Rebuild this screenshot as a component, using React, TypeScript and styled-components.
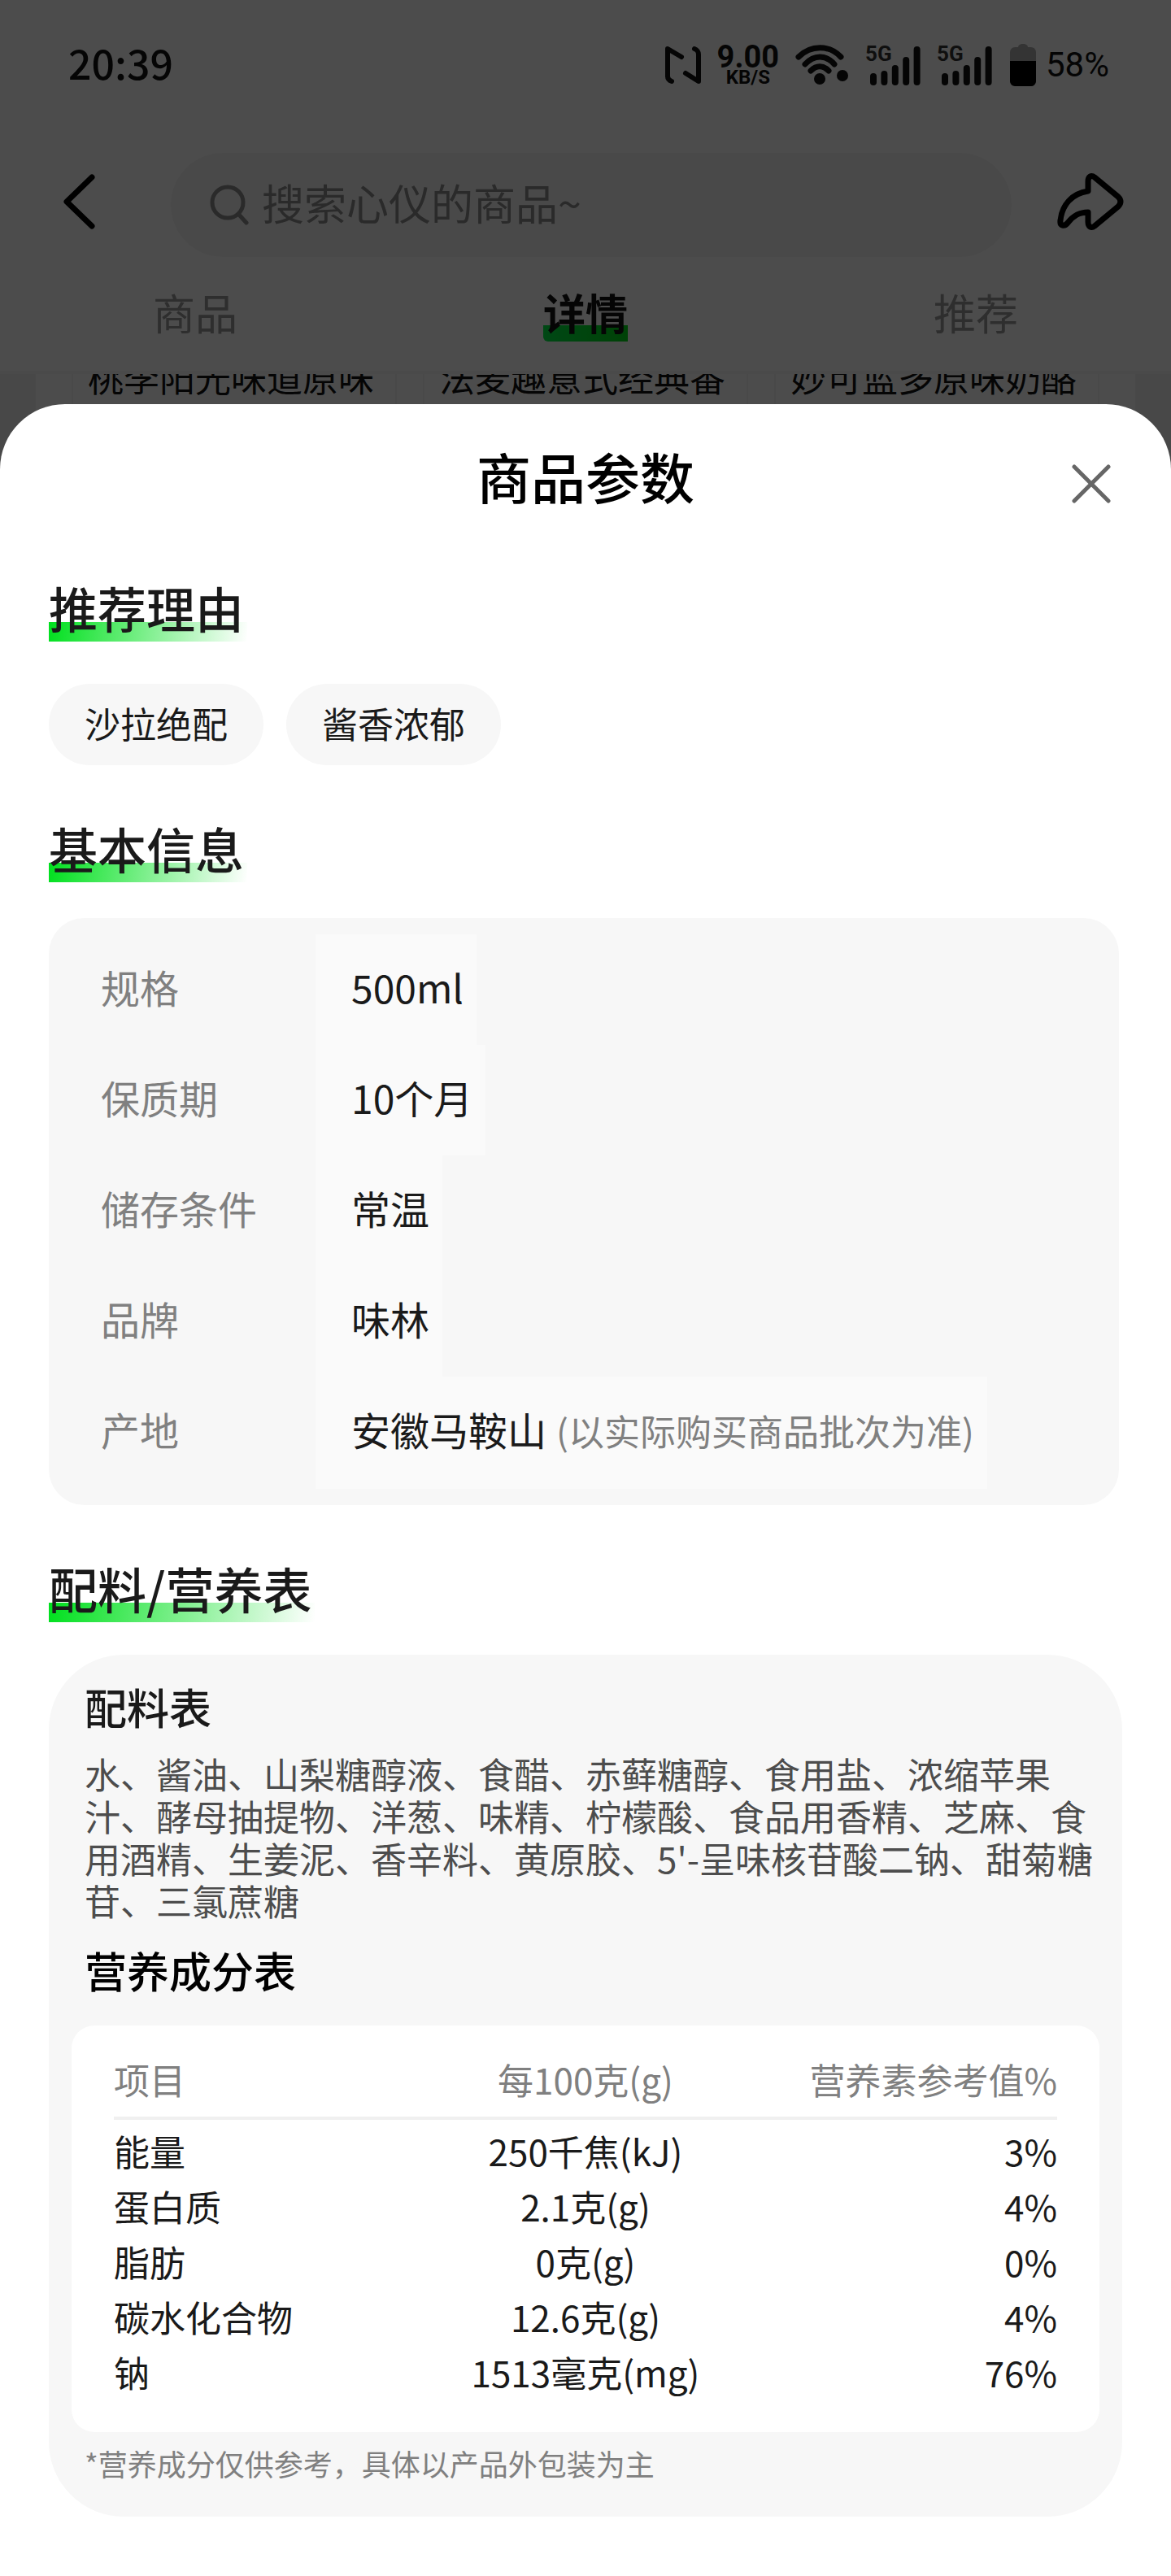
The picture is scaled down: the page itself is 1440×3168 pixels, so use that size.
import React from "react";
import styled, { createGlobalStyle } from "styled-components";

const GlobalStyle = createGlobalStyle`
  *, *::before, *::after { box-sizing: border-box; }
  body {
    margin: 0;
    background: #fff;
    color: #1a1a1a;
    font-family: "Noto Sans CJK SC", "Liberation Sans", sans-serif;
    font-size: 44px;
  }
  button, input { font: inherit; }
`;

const Page = styled.div`
  position: relative;
  display: flex;
  flex-direction: column;
  min-height: 100vh;
`;

const TopArea = styled.header`
  background: #fff;
  border-bottom: 4px solid #f7f7f7;
`;

const StatusBar = styled.div`
  display: flex;
  align-items: center;
  justify-content: space-between;
  height: 160px;
  padding: 0 76px 0 84px;
  color: #111;
`;

const Clock = styled.time`
  padding-bottom: 8px;
  font-size: 50px;
  font-weight: 500;
  line-height: 64px;
`;

const StatusIcons = styled.div`
  display: flex;
  align-items: center;
  gap: 20px;
  font-family: Roboto, "Liberation Sans", sans-serif;

  svg { display: block; }
`;

const Speed = styled.div`
  display: flex;
  flex-direction: column;
  align-items: center;
  font-weight: 700;
`;

const SpeedValue = styled.span`
  font-size: 38px;
  line-height: 30px;
`;

const SpeedUnit = styled.span`
  font-size: 24px;
  line-height: 20px;
`;

const Signal = styled.div`
  display: grid;
  width: 68px;

  > * { grid-area: 1 / 1; }
`;

const SignalLabel = styled.span`
  font-size: 26px;
  font-weight: 700;
  line-height: 22px;
  color: #333;
`;

const Battery = styled.div`
  display: flex;
  align-items: center;
  gap: 12px;
  margin-left: 2px;
  font-size: 42px;
  line-height: 52px;
`;

const NavBar = styled.nav`
  display: flex;
  align-items: flex-start;
  padding: 28px 58px 32px 76px;
`;

const IconButton = styled.button`
  display: flex;
  align-items: center;
  flex: none;
  height: 120px;
  padding: 0;
  border: 0;
  background: none;
  color: #000;
`;

const SearchBox = styled.label`
  display: flex;
  align-items: center;
  flex: 1;
  gap: 16px;
  height: 128px;
  margin: 0 56px 0 92px;
  padding: 0 48px;
  border-radius: 64px;
  background: #f6f6f6;
  color: #8c8c8c;

  svg { flex: none; }
`;

const SearchInput = styled.input`
  flex: 1;
  min-width: 0;
  height: 88px;
  padding: 0 0 8px;
  border: 0;
  outline: 0;
  background: none;
  font-size: 52px;

  &::placeholder { color: #8c8c8c; opacity: 1; }
`;

const Tabs = styled.div`
  display: flex;
  padding-bottom: 36px;
`;

const TabCell = styled.div`
  display: flex;
  flex: 1;
  justify-content: center;
`;

const Tab = styled.button<{ $active?: boolean }>`
  padding: 0;
  border: 0;
  background: ${(p) =>
    p.$active
      ? "linear-gradient(90deg, #00f046, #00dc18) left bottom / 100% 20px no-repeat"
      : "none"};
  border-radius: 0 0 0 6px;
  font-size: 52px;
  font-weight: ${(p) => (p.$active ? 700 : 400)};
  line-height: 72px;
  color: ${(p) => (p.$active ? "#111" : "#999")};
`;

const Strip = styled.div`
  height: 117px;
  padding: 0 44px;
  overflow: hidden;
  background: #f0f0f0;
`;

const StripInner = styled.div`
  display: flex;
  gap: 32px;
  height: 100%;
  padding: 0 44px;
  background: #fff;
`;

const ProductCard = styled.div`
  flex: 1;
  min-width: 0;
  padding: 0 18px;
  border: 2px solid #f4f4f4;
  border-width: 0 2px;
`;

const ProductName = styled.div`
  margin-top: -27px;
  white-space: nowrap;
  line-height: 60px;
  color: #111;
`;

const Backdrop = styled.div`
  position: absolute;
  inset: 0;
  background: rgba(0, 0, 0, 0.7);
`;

const Sheet = styled.main`
  position: relative;
  flex: 1;
  margin-top: -80px;
  padding-bottom: 72px;
  border-radius: 80px 80px 0 0;
  background: #fff;
`;

const SheetHeader = styled.div`
  display: grid;
  grid-template-columns: 1fr auto 1fr;
  align-items: end;
  padding: 44px 64px 16px;
`;

const SheetTitle = styled.h1`
  grid-column: 2;
  margin: 0;
  font-size: 67px;
  font-weight: 500;
  line-height: 88px;
  color: #000;
`;

const CloseButton = styled.button`
  display: flex;
  align-items: center;
  justify-content: center;
  justify-self: end;
  width: 68px;
  height: 68px;
  padding: 0;
  border: 0;
  background: none;
  color: #666;
`;

const Section = styled.section`
  padding: 60px 60px 0;
`;

const SectionTitle = styled.h2`
  width: fit-content;
  margin: 0 0 40px;
  padding-right: 4px;
  background: linear-gradient(100deg, #00e01e, rgba(0, 224, 30, 0)) left bottom /
    100% 24px no-repeat;
  font-size: 60px;
  font-weight: 500;
  line-height: 84px;
`;

const Chips = styled.ul`
  display: flex;
  gap: 28px;
  margin: 0;
  padding: 12px 0 0;
  list-style: none;
`;

const Chip = styled.li`
  padding: 0 44px 4px;
  border-radius: 50px;
  background: #f7f7f7;
  line-height: 96px;
`;

const InfoList = styled.dl`
  margin: 44px 4px 0 0;
  padding: 20px 64px;
  border-radius: 44px;
  background: #f7f7f7;
  font-size: 48px;
  line-height: 128px;
`;

const InfoRow = styled.div`
  display: flex;
`;

const InfoLabel = styled.dt`
  width: 264px;
  padding-bottom: 8px;
  color: #808080;
`;

const InfoValue = styled.dd`
  margin: 0;
  padding: 0 16px 8px 44px;
  background: #fafafa;
`;

const InfoNote = styled.span`
  margin-left: 12px;
  font-size: 44px;
  color: #808080;
`;

const NutritionCard = styled.div`
  padding: 32px 28px 44px;
  border-radius: 92px;
  background: #f7f7f7;
`;

const CardTitle = styled.h3<{ $dark?: boolean }>`
  margin: 0;
  padding: 0 16px;
  font-size: 52px;
  font-weight: 500;
  line-height: 64px;
  color: ${(p) => (p.$dark ? "#000" : "#1a1a1a")};
`;

const Ingredients = styled.p`
  margin: 24px 0 28px;
  padding: 0 8px 0 16px;
  line-height: 52px;
  color: #4d4d4d;
`;

const TablePanel = styled.div`
  margin: 36px 0 16px;
  padding: 32px 52px 40px;
  border-radius: 28px;
  background: #fff;
`;

const Table = styled.table`
  width: 100%;
  table-layout: fixed;
  border-collapse: separate;
  border-spacing: 0;
  line-height: 68px;
`;

const HeadCell = styled.th<{ $align: string }>`
  padding: 0 0 12px;
  border-bottom: 4px solid #f0f0f0;
  font-weight: 400;
  text-align: ${(p) => p.$align};
  color: #808080;
`;

const BodyCell = styled.td<{ $align: string }>`
  padding: 0;
  text-align: ${(p) => p.$align};

  tr:first-child > & { padding-top: 4px; }
`;

const Footnote = styled.p`
  margin: 0;
  padding: 0 16px;
  font-size: 36px;
  line-height: 44px;
  color: #808080;
`;

const ALIGN = ["left", "center", "right"];

const PRODUCTS = ["桃李阳光味道原味", "法麦趣意式经典番", "妙可蓝多原味奶酪"];

const REASONS = ["沙拉绝配", "酱香浓郁"];

const INFO: { label: string; value: string; note?: string }[] = [
  { label: "规格", value: "500ml" },
  { label: "保质期", value: "10个月" },
  { label: "储存条件", value: "常温" },
  { label: "品牌", value: "味林" },
  { label: "产地", value: "安徽马鞍山", note: "(以实际购买商品批次为准)" },
];

const INGREDIENTS =
  "水、酱油、山梨糖醇液、食醋、赤藓糖醇、食用盐、浓缩苹果汁、酵母抽提物、洋葱、味精、柠檬酸、食品用香精、芝麻、食用酒精、生姜泥、香辛料、黄原胶、5'-呈味核苷酸二钠、甜菊糖苷、三氯蔗糖";

const HEAD = ["项目", "每100克(g)", "营养素参考值%"];

const NUTRITION = [
  ["能量", "250千焦(kJ)", "3%"],
  ["蛋白质", "2.1克(g)", "4%"],
  ["脂肪", "0克(g)", "0%"],
  ["碳水化合物", "12.6克(g)", "4%"],
  ["钠", "1513毫克(mg)", "76%"],
];

const NfcIcon = () => (
  <svg width="44" height="48" viewBox="0 0 44 48" fill="none" stroke="currentColor" strokeWidth="6" strokeLinecap="round" strokeLinejoin="round">
    <path d="M8 44C5 43 3 41 3 38V4L20 14" />
    <path d="M36 4C39 5 41 8 41 11V44L25 34" />
  </svg>
);

const WifiIcon = () => (
  <svg width="66" height="50" viewBox="0 0 66 50" fill="none" stroke="currentColor" strokeWidth="7" strokeLinecap="round">
    <path d="M4 15C19 0 42 0 56 15" />
    <path d="M12 24C23 12 38 12 48 24" />
    <path d="M19 32C26 25 34 25 41 32" />
    <circle cx="30" cy="42" r="7" fill="currentColor" stroke="none" />
    <circle cx="58" cy="38" r="7" fill="currentColor" stroke="none" />
  </svg>
);

const BARS = [15, 18, 25, 35, 48];

const SignalIcon = () => (
  <Signal>
    <SignalLabel>5G</SignalLabel>
    <svg width="68" height="50" viewBox="0 0 68 50" fill="currentColor">
      {BARS.map((h, i) => (
        <rect key={h} x={6 + i * 13.4} y={50 - h} width="8" height={h} rx="4" />
      ))}
    </svg>
  </Signal>
);

const BatteryIcon = () => (
  <svg width="32" height="52" viewBox="0 0 32 52">
    <path d="M10 4C10 2 12 0 16 0S22 2 22 4H26A6 6 0 0 1 32 10V21H0V10A6 6 0 0 1 6 4Z" fill="#b0b0b0" />
    <path d="M0 21H32V46A6 6 0 0 1 26 52H6A6 6 0 0 1 0 46Z" fill="#000" />
  </svg>
);

const BackIcon = () => (
  <svg width="42" height="72" viewBox="0 0 42 72" fill="none" stroke="currentColor" strokeWidth="7" strokeLinecap="round" strokeLinejoin="round">
    <path d="M37 6L6 36L37 66" />
  </svg>
);

const ShareIcon = () => (
  <svg width="82" height="70" viewBox="0 0 82 70" fill="none" stroke="currentColor" strokeWidth="7" strokeLinejoin="round">
    <path d="M38 22V10C38 4 42 2 46 5L75 29C79 33 79 37 75 41L46 65C42 68 38 66 38 60V48C27 48 20 52 13 61C9 66 3 65 4 58C6 39 18 25 38 22Z" />
  </svg>
);

const SearchIcon = () => (
  <svg width="48" height="50" viewBox="0 0 48 50" fill="none" stroke="currentColor" strokeWidth="5" strokeLinecap="round">
    <circle cx="22" cy="22" r="19" />
    <path d="M35 36L45 47" />
  </svg>
);

const CloseIcon = () => (
  <svg width="48" height="48" viewBox="0 0 48 48" fill="none" stroke="currentColor" strokeWidth="5" strokeLinecap="round">
    <path d="M3 3L45 45M45 3L3 45" />
  </svg>
);

export default function App() {
  return (
    <>
      <GlobalStyle />
      <Page>
        <TopArea>
          <StatusBar>
            <Clock>20:39</Clock>
            <StatusIcons>
              <NfcIcon />
              <Speed>
                <SpeedValue>9.00</SpeedValue>
                <SpeedUnit>KB/S</SpeedUnit>
              </Speed>
              <WifiIcon />
              <SignalIcon />
              <SignalIcon />
              <Battery>
                <BatteryIcon />
                <span>58%</span>
              </Battery>
            </StatusIcons>
          </StatusBar>
          <NavBar>
            <IconButton type="button" aria-label="返回">
              <BackIcon />
            </IconButton>
            <SearchBox>
              <SearchIcon />
              <SearchInput type="text" placeholder="搜索心仪的商品~" aria-label="搜索" />
            </SearchBox>
            <IconButton type="button" aria-label="分享">
              <ShareIcon />
            </IconButton>
          </NavBar>
          <Tabs>
            <TabCell>
              <Tab type="button">商品</Tab>
            </TabCell>
            <TabCell>
              <Tab type="button" $active>详情</Tab>
            </TabCell>
            <TabCell>
              <Tab type="button">推荐</Tab>
            </TabCell>
          </Tabs>
        </TopArea>
        <Strip>
          <StripInner>
            {PRODUCTS.map((name) => (
              <ProductCard key={name}>
                <ProductName>{name}</ProductName>
              </ProductCard>
            ))}
          </StripInner>
        </Strip>
        <Backdrop />
        <Sheet role="dialog" aria-labelledby="sheet-title">
          <SheetHeader>
            <SheetTitle id="sheet-title">商品参数</SheetTitle>
            <CloseButton type="button" aria-label="关闭">
              <CloseIcon />
            </CloseButton>
          </SheetHeader>
          <Section>
            <SectionTitle>推荐理由</SectionTitle>
            <Chips>
              {REASONS.map((reason) => (
                <Chip key={reason}>{reason}</Chip>
              ))}
            </Chips>
          </Section>
          <Section>
            <SectionTitle>基本信息</SectionTitle>
            <InfoList>
              {INFO.map((row) => (
                <InfoRow key={row.label}>
                  <InfoLabel>{row.label}</InfoLabel>
                  <InfoValue>
                    {row.value}
                    {row.note && <InfoNote>{row.note}</InfoNote>}
                  </InfoValue>
                </InfoRow>
              ))}
            </InfoList>
          </Section>
          <Section>
            <SectionTitle>配料/营养表</SectionTitle>
            <NutritionCard>
              <CardTitle>配料表</CardTitle>
              <Ingredients>{INGREDIENTS}</Ingredients>
              <CardTitle $dark>营养成分表</CardTitle>
              <TablePanel>
                <Table>
                  <thead>
                    <tr>
                      {HEAD.map((text, i) => (
                        <HeadCell key={text} scope="col" $align={ALIGN[i]}>{text}</HeadCell>
                      ))}
                    </tr>
                  </thead>
                  <tbody>
                    {NUTRITION.map((row) => (
                      <tr key={row[0]}>
                        {row.map((text, i) => (
                          <BodyCell key={ALIGN[i]} $align={ALIGN[i]}>{text}</BodyCell>
                        ))}
                      </tr>
                    ))}
                  </tbody>
                </Table>
              </TablePanel>
              <Footnote>*营养成分仅供参考，具体以产品外包装为主</Footnote>
            </NutritionCard>
          </Section>
        </Sheet>
      </Page>
    </>
  );
}
